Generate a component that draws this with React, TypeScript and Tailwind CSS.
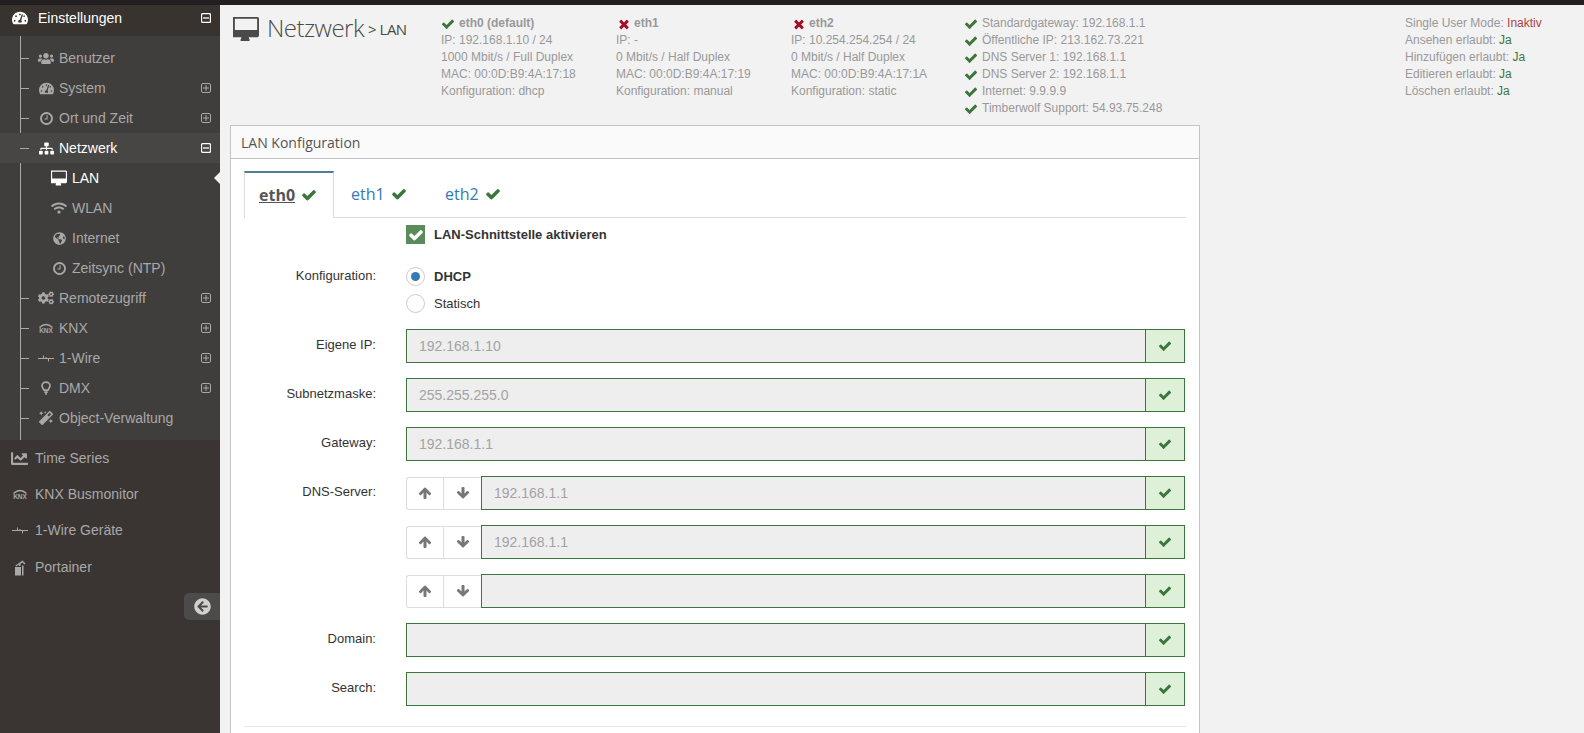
import React from 'react';
import { FaTachometerAlt, FaUsers, FaSitemap, FaWifi, FaGlobeAmericas, FaCogs, FaMagic, FaChartLine, FaArrowCircleLeft } from 'react-icons/fa';

// Font Awesome 4 glyphs, the v5 ones in react-icons are too thin here
const Fa4 = ({ d, size, className = '' }: { d: string; size: number; className?: string }) => (
  <svg width={size} height={size} viewBox="0 0 1792 1792" fill="currentColor" className={'shrink-0 ' + className}>
    <path d={d} />
  </svg>
);

const CHECK = 'M1671 566q0 40-28 68l-724 724-136 136q-28 28-68 28t-68-28l-136-136-362-362q-28-28-28-68t28-68l136-136q28-28 68-28t68 28l294 295 656-657q28-28 68-28t68 28l136 136q28 28 28 68z';
const TIMES = 'M1490 1322q0 40-28 68l-136 136q-28 28-68 28t-68-28l-294-294-294 294q-28 28-68 28t-68-28l-136-136q-28-28-28-68t28-68l294-294-294-294q-28-28-28-68t28-68l136-136q28-28 68-28t68 28l294 294 294-294q28-28 68-28t68 28l136 136q28 28 28 68t-28 68l-294 294 294 294q28 28 28 68z';
const UP = 'M1675 971q0 51-37 90l-75 75q-38 38-91 38-54 0-90-38l-294-293v704q0 52-37.5 84.5t-90.5 32.5h-128q-53 0-90.5-32.5t-37.5-84.5v-704l-294 293q-36 38-90 38t-90-38l-75-75q-38-38-38-90 0-53 38-91l651-651q35-37 90-37 54 0 91 37l651 651q37 39 37 91z';
const DOWN = 'M1675 832q0 53-37 90l-651 652q-39 37-91 37-53 0-90-37l-651-652q-38-36-38-90 0-53 38-91l74-75q39-37 91-37 53 0 90 37l294 294v-704q0-52 38-90t90-38h128q52 0 90 38t38 90v704l294-294q37-37 90-37 52 0 91 37l75 75q37 39 37 91z';
const DESKTOP = 'M1664 928v-704q0-13-9.5-22.5t-22.5-9.5h-1472q-13 0-22.5 9.5t-9.5 22.5v704q0 13 9.5 22.5t22.5 9.5h1472q13 0 22.5-9.5t9.5-22.5zm128-704v1088q0 66-47 113t-113 47h-544q0 37 16 77.5t32 71 16 43.5q0 26-19 45t-45 19h-512q-26 0-45-19t-19-45q0-14 16-43.5t32-70 16-77.5h-544q-66 0-113-47t-47-113v-1088q0-66 47-113t113-47h1632q66 0 113 47t47 113z';
const CLOCK = 'M1024 544v448q0 14-9 23t-23 9h-320q-14 0-23-9t-9-23v-64q0-14 9-23t23-9h224v-352q0-14 9-23t23-9h64q14 0 23 9t9 23zm416 352q0-148-73-273t-198-198-273-73-273 73-198 198-73 273 73 273 198 198 273 73 273-73 198-198 73-273zm224 0q0 209-103 385.5t-279.5 279.5-385.5 103-385.5-103-279.5-279.5-103-385.5 103-385.5 279.5-279.5 385.5-103 385.5 103 279.5 279.5 103 385.5z';

const KnxIcon = () => (
  <svg width="16" height="10" viewBox="0 0 16 10" fill="none">
    <path d="M1.5 4.5 Q8 -1.5 14.5 4.5" stroke="currentColor" strokeWidth="1.4" />
    <text x="8" y="9.5" textAnchor="middle" fontSize="6.5" fontWeight="700" fontFamily="Liberation Sans" fill="currentColor">KNX</text>
  </svg>
);

const WireIcon = () => (
  <svg width="16" height="8" viewBox="0 0 16 8" fill="none" stroke="currentColor" strokeWidth="1">
    <path d="M0 4.5H16M5.5 1.5V4.5M10.5 4.5V7.5M8 3V4.5" />
  </svg>
);

const BulbIcon = () => (
  <svg width="10" height="14" viewBox="0 0 12 16" fill="none" stroke="currentColor" strokeWidth="2">
    <path d="M3.5 10.5C3 8.5 1.2 7.5 1.2 5.2a4.8 4.3 0 0 1 9.6 0c0 2.3-1.8 3.3-2.3 5.3z" />
    <path d="M4 13h4M5 15h2" />
  </svg>
);

const PortainerIcon = () => (
  <svg width="12" height="17" viewBox="0 0 12 17" fill="currentColor">
    <path d="M1 8h6v8.5H1zM8 6.5h1.5v10H8zM1.5 6.5L8.5 1.5l3 3-1 1-2-2L2 7.5zM5 4.5h1.5V7H5z" />
  </svg>
);

const Toggle = ({ open, white }: { open?: boolean; white?: boolean }) => (
  <svg width="10" height="10" viewBox="0 0 10 10" fill="none" stroke={white ? '#ffffff' : '#a8a8a8'} strokeWidth={white ? 1.3 : 1}>
    <rect x="0.5" y="0.5" width="9" height="9" rx="1.5" />
    <path d="M2 5H8" />
    {!open && <path d="M5 2V8" />}
  </svg>
);

const subItems = [
  { label: 'Benutzer', icon: <FaUsers size={17} /> },
  { label: 'System', icon: <FaTachometerAlt size={15} />, toggle: true },
  { label: 'Ort und Zeit', icon: <Fa4 d={CLOCK} size={15} />, toggle: true },
  { label: 'Netzwerk', icon: <FaSitemap size={15} />, toggle: true, open: true, active: true },
  { label: 'LAN', icon: <Fa4 d={DESKTOP} size={16} />, child: true, current: true },
  { label: 'WLAN', icon: <FaWifi size={16} />, child: true },
  { label: 'Internet', icon: <FaGlobeAmericas size={13} />, child: true },
  { label: 'Zeitsync (NTP)', icon: <Fa4 d={CLOCK} size={15} />, child: true },
  { label: 'Remotezugriff', icon: <FaCogs size={16} />, toggle: true },
  { label: 'KNX', icon: <KnxIcon />, toggle: true },
  { label: '1-Wire', icon: <WireIcon />, toggle: true },
  { label: 'DMX', icon: <BulbIcon />, toggle: true },
  { label: 'Object-Verwaltung', icon: <FaMagic size={14} /> },
];

const mainItems = [
  { label: 'Time Series', icon: <FaChartLine size={17} /> },
  { label: 'KNX Busmonitor', icon: <KnxIcon /> },
  { label: '1-Wire Geräte', icon: <WireIcon /> },
  { label: 'Portainer', icon: <PortainerIcon />, shift: true },
];

const Sidebar = () => (
  <aside className="w-[220px] shrink-0 bg-[#3a3533] text-[14px] text-[#a8a8a8]">
    <div className="relative flex h-[31px] items-center bg-[#39332f] pl-[12px] pb-[5px] text-white">
      <span className="flex w-[26px]"><FaTachometerAlt size={16} /></span>
      Einstellungen
      <span className="absolute right-[9px] top-[8px] flex"><Toggle open white /></span>
    </div>
    <div className="relative bg-[#403e3d] pt-[7px] pb-[7px]">
      <span className="absolute left-[20px] top-0 bottom-0 w-px bg-[#a8a8a8]" />
      {subItems.map((item) => (
        <div
          key={item.label}
          className={
            'relative flex h-[30px] items-center ' +
            (item.child ? 'pl-[51px] ' : 'pl-[38px] ') +
            (item.active ? 'bg-[#474645] text-white ' : '') +
            (item.current ? 'text-white ' : '')
          }
        >
          {!item.child && <span className="absolute left-[20px] top-[15px] h-px w-[9px] bg-[#a8a8a8]" />}
          <span className="mr-[5px] flex w-[16px] items-center justify-center">{item.icon}</span>
          {item.label}
          {item.toggle && <span className="absolute right-[9px] top-[10px] flex"><Toggle open={item.open} white={item.active} /></span>}
          {item.current && <span className="absolute right-0 top-[9px] h-0 w-0 border-y-[6px] border-r-[6px] border-y-transparent border-r-[#f2f2f2]" />}
        </div>
      ))}
    </div>
    {mainItems.map((item) => (
      <div key={item.label} className={'flex h-[36px] items-center pl-[11px] ' + (item.shift ? 'pt-[2px]' : '')}>
        <span className="mr-[7px] flex w-[17px] items-center justify-center">{item.icon}</span>
        {item.label}
      </div>
    ))}
    <div className="mt-[9px] flex justify-end">
      <div className="flex h-[27px] w-[36px] items-center justify-center rounded-l-[5px] bg-[#4d4b4a] text-[#d0d0d0]">
        <FaArrowCircleLeft size={17} />
      </div>
    </div>
  </aside>
);

const InfoLine = ({ children, className = '' }: { children: React.ReactNode; className?: string }) => (
  <div className={'flex h-[17px] items-center whitespace-pre leading-[17px] ' + className}>{children}</div>
);

const Ok = () => <Fa4 d={CHECK} size={14} className="mr-[4px] text-[#3c763d]" />;
const Bad = () => <Fa4 d={TIMES} size={14} className="ml-[1px] mr-[3px] text-[#a10f2b]" />;

const ifaces = [
  { x: 'w-[175px]', name: 'eth0 (default)', ok: true, lines: ['IP: 192.168.1.10 / 24', '1000 Mbit/s / Full Duplex', 'MAC: 00:0D:B9:4A:17:18', 'Konfiguration: dhcp'] },
  { x: 'w-[175px]', name: 'eth1', lines: ['IP: -', '0 Mbit/s / Half Duplex', 'MAC: 00:0D:B9:4A:17:19', 'Konfiguration: manual'] },
  { x: 'w-[174px]', name: 'eth2', lines: ['IP: 10.254.254.254 / 24', '0 Mbit/s / Half Duplex', 'MAC: 00:0D:B9:4A:17:1A', 'Konfiguration: static'] },
];

const status = [
  'Standardgateway: 192.168.1.1',
  'Öffentliche IP: 213.162.73.221',
  'DNS Server 1: 192.168.1.1',
  'DNS Server 2: 192.168.1.1',
  'Internet: 9.9.9.9',
  'Timberwolf Support: 54.93.75.248',
];

const rights = [
  ['Ansehen erlaubt: ', 'Ja'],
  ['Hinzufügen erlaubt: ', 'Ja'],
  ['Editieren erlaubt: ', 'Ja'],
  ['Löschen erlaubt: ', 'Ja'],
];

const Header = () => (
  <header className="flex h-[120px] text-[12px] text-[#999]">
    <div className="flex w-[221px] shrink-0 items-start pl-[13px] pt-[8px] text-[#4a4a4a]" style={{ fontFamily: '"Open Sans", sans-serif' }}>
      <Fa4 d={DESKTOP} size={26} className="mr-[8px] mt-[3px]" />
      <span className="text-[24px] leading-[30px] tracking-[-0.5px] font-light">Netzwerk</span>
      <span className="ml-[4px] mt-[6px] text-[15px] leading-[20px] tracking-[-0.5px]">&gt; LAN</span>
    </div>
    <div className="flex pt-[10px]">
      {ifaces.map((f) => (
        <div key={f.name} className={f.x}>
          <InfoLine className="font-bold">{f.ok ? <Ok /> : <Bad />}{f.name}</InfoLine>
          {f.lines.map((l) => <InfoLine key={l}>{l}</InfoLine>)}
        </div>
      ))}
      <div className="-ml-[1px] w-[441px]">
        {status.map((s) => <InfoLine key={s}><Ok />{s}</InfoLine>)}
      </div>
      <div>
        <InfoLine>Single User Mode: <span className="text-[#a94442]">Inaktiv</span></InfoLine>
        {rights.map(([l, v]) => <InfoLine key={l}>{l}<span className="text-[#3c763d]">{v}</span></InfoLine>)}
      </div>
    </div>
  </header>
);

const Addon = () => (
  <div className="flex h-full w-[39px] shrink-0 items-center justify-center border-l border-[#3c763d] bg-[#dff0d8] text-[#3c763d]">
    <Fa4 d={CHECK} size={14} />
  </div>
);

const Arrows = () => (
  <div className="flex h-[33px] w-[75px] shrink-0 self-center rounded-l-[3px] border border-r-0 border-[#ddd] bg-white text-[#777]">
    <div className="flex w-[37px] items-center justify-center border-r border-[#ddd]"><Fa4 d={UP} size={14} /></div>
    <div className="flex flex-1 items-center justify-center"><Fa4 d={DOWN} size={14} /></div>
  </div>
);

const Field = ({ label, value, arrows }: { label?: string; value?: string; arrows?: boolean }) => (
  <div className="mb-[15px] flex h-[34px] items-start">
    <label className="w-[132px] shrink-0 pt-[7px] text-right text-[13px] leading-[17px] text-[#333]">{label}</label>
    <div className="ml-[30px] flex h-[34px] w-[779px]">
      {arrows && <Arrows />}
      <div className="flex h-full flex-1 items-stretch border border-[#3c763d]">
        <div className="flex flex-1 items-center bg-[#eeeeee] pl-[12px] text-[14px] text-[#a3a3a3]">{value}</div>
        <Addon />
      </div>
    </div>
  </div>
);

const Radio = ({ on, label }: { on?: boolean; label: string }) => (
  <div className="flex h-[27px] items-center">
    <span className="flex h-[19px] w-[19px] items-center justify-center rounded-full border border-[#ccc] bg-white">
      {on && <span className="h-[9px] w-[9px] rounded-full bg-[#337ab7]" />}
    </span>
    <span className={'ml-[9px] text-[13px] ' + (on ? 'font-bold text-[#333]' : 'text-[#333]')}>{label}</span>
  </div>
);

const Panel = () => (
  <section className="ml-[10px] min-h-[640px] w-[970px] border border-b-0 border-[#c4c4c4] bg-white">
    <div className="flex h-[33px] items-center border-b border-[#c4c4c4] bg-[#fafafa] pl-[10px] text-[14px] text-[#555]" style={{ fontFamily: '"Open Sans", sans-serif' }}>
      LAN Konfiguration
    </div>
    <div className="px-[13px] pt-[12px]">
      <div className="flex h-[47px] border-b border-[#ddd] text-[16px]" style={{ fontFamily: '"Open Sans", sans-serif' }}>
        <div className="-mb-px flex w-[90px] items-center border-x border-t-[2px] border-x-[#ddd] border-t-[#4f7f96] bg-white pb-[2px] pl-[14px] font-bold text-[#555]">
          <span className="underline">eth0</span><Fa4 d={CHECK} size={16} className="ml-[6px] text-[#3c763d]" />
        </div>
        {['eth1', 'eth2'].map((t) => (
          <div key={t} className="flex w-[94px] items-center pb-[1px] pl-[17px] text-[#337ab7]">
            {t}<Fa4 d={CHECK} size={16} className="ml-[6px] text-[#3c763d]" />
          </div>
        ))}
      </div>
      <div className="ml-[162px] mt-[7px] flex h-[19px] items-center">
        <span className="flex h-[19px] w-[19px] items-center justify-center bg-[#5b8a5b] text-white"><Fa4 d={CHECK} size={16} /></span>
        <span className="ml-[9px] text-[13px] font-bold text-[#333]">LAN-Schnittstelle aktivieren</span>
      </div>
      <div className="mt-[19px] flex h-[66px] items-start">
        <label className="w-[132px] pt-[4px] text-right text-[13px] leading-[17px] text-[#333]">Konfiguration:</label>
        <div className="ml-[30px]">
          <Radio on label="DHCP" />
          <Radio label="Statisch" />
        </div>
      </div>
      <Field label="Eigene IP:" value="192.168.1.10" />
      <Field label="Subnetzmaske:" value="255.255.255.0" />
      <Field label="Gateway:" value="192.168.1.1" />
      <Field label="DNS-Server:" value="192.168.1.1" arrows />
      <Field value="192.168.1.1" arrows />
      <Field arrows />
      <Field label="Domain:" />
      <Field label="Search:" />
      <div className="mt-[20px] h-[10px] border-t border-[#e5e5e5]" />
    </div>
  </section>
);

export default function App() {
  return (
    <div className="h-[733px] overflow-hidden bg-[#231f20] pt-[5px]" style={{ fontFamily: '"Liberation Sans", Arial, sans-serif' }}>
      <div className="flex h-[728px]">
        <Sidebar />
        <main className="flex-1 overflow-hidden bg-[#f2f2f2]">
          <Header />
          <Panel />
        </main>
      </div>
    </div>
  );
}
